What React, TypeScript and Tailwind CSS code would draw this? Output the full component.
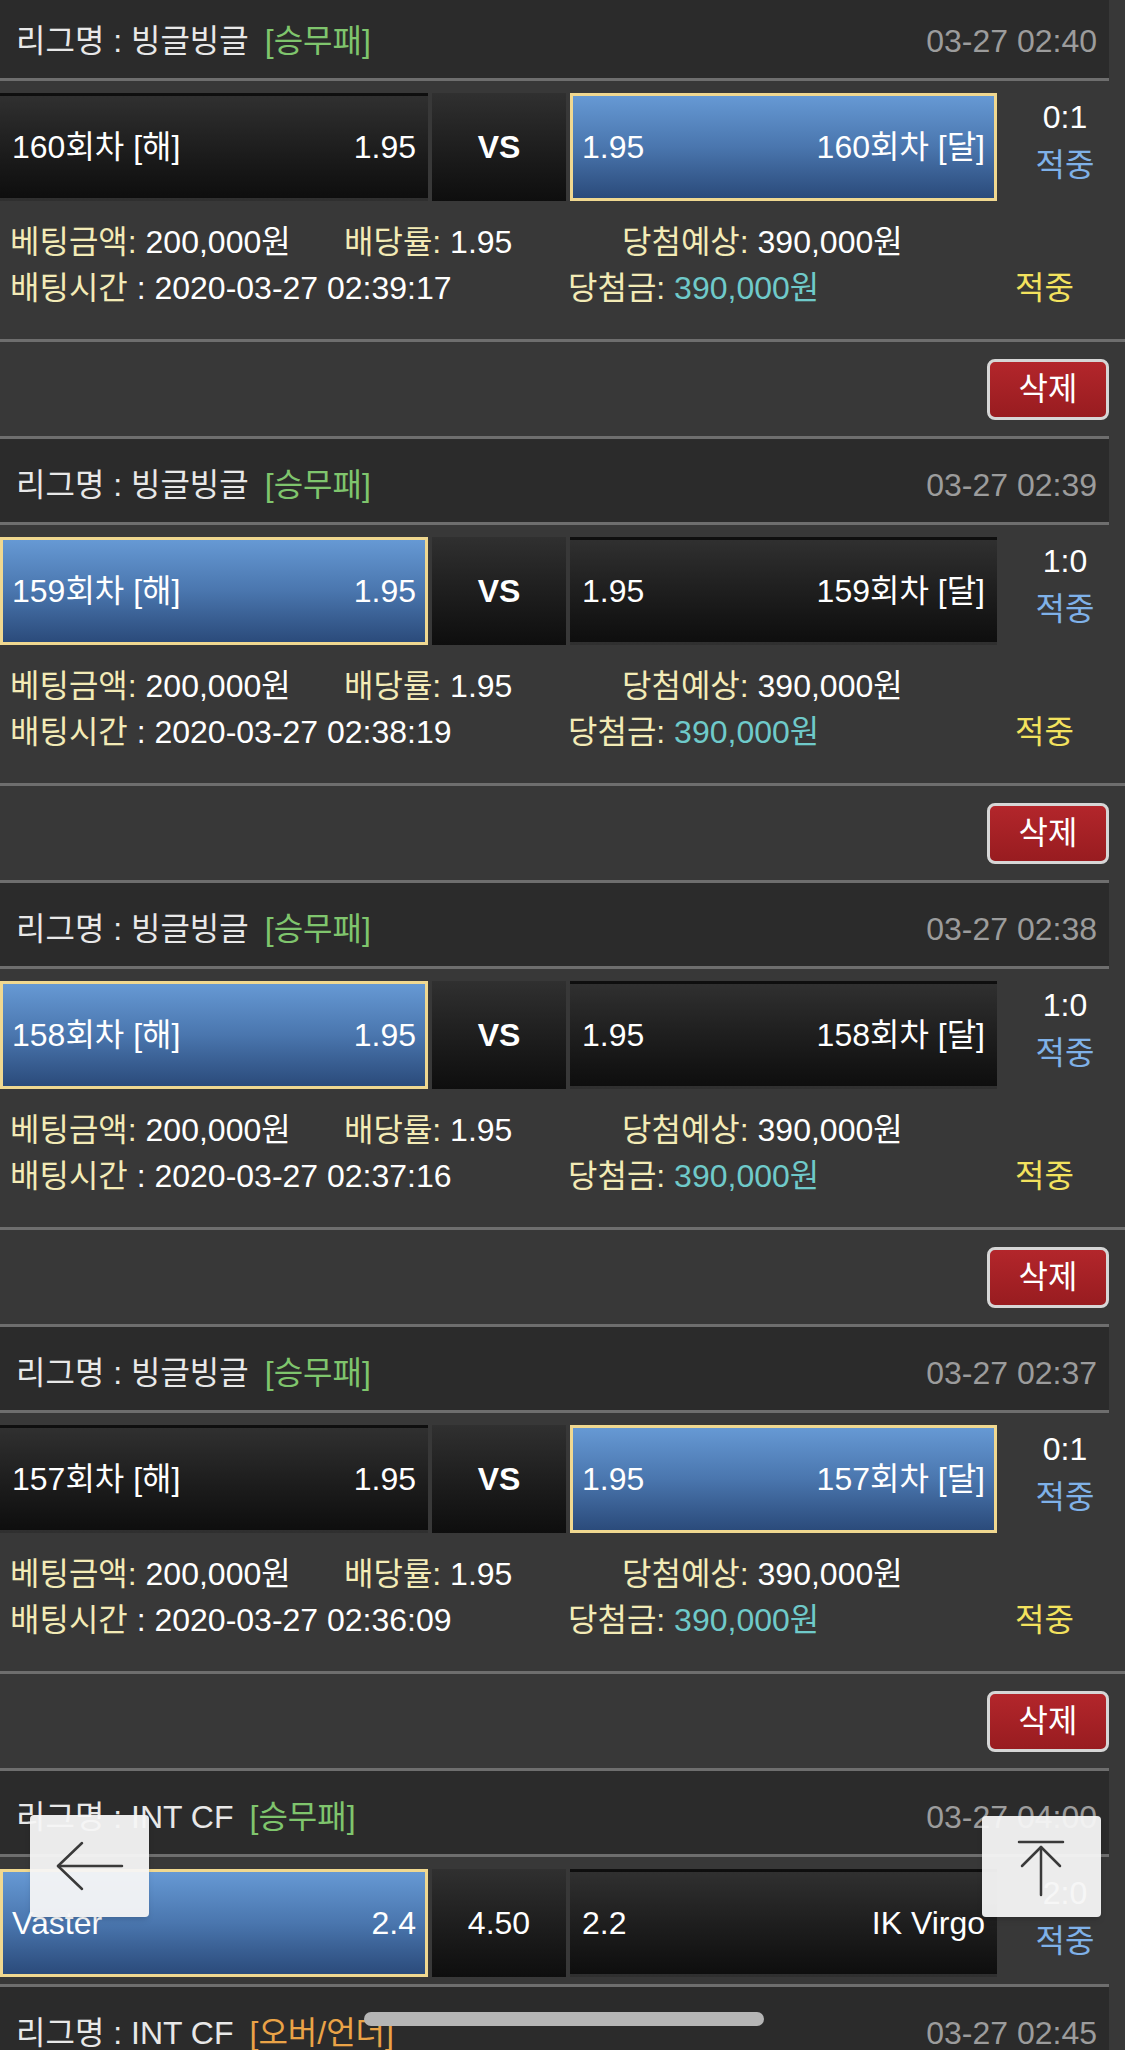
import React from "react";

type Bet = {
  round: number;
  pick: "home" | "away";
  score: string;
  time: string;
  betTime: string;
};

const bets: Bet[] = [
  { round: 160, pick: "away", score: "0:1", time: "03-27 02:40", betTime: "2020-03-27 02:39:17" },
  { round: 159, pick: "home", score: "1:0", time: "03-27 02:39", betTime: "2020-03-27 02:38:19" },
  { round: 158, pick: "home", score: "1:0", time: "03-27 02:38", betTime: "2020-03-27 02:37:16" },
  { round: 157, pick: "away", score: "0:1", time: "03-27 02:37", betTime: "2020-03-27 02:36:09" },
];

const LeagueHeader = ({ league, type, typeClass, time }: { league: string; type: string; typeClass: string; time: string }) => (
  <div className="w-[1109px] border-y-[3px] border-[#6e6e6e] bg-[#2b2b2b]">
    <div className="flex h-[83px] items-center justify-between pl-4 pr-3 pt-2">
      <div className="text-[#e8e8e8]">
        {league}
        <span className={`ml-4 ${typeClass}`}>{type}</span>
      </div>
      <div className="text-[#9c9c9c]">{time}</div>
    </div>
  </div>
);

const Side = ({ name, odds, picked, reverse }: { name: string; odds: string; picked: boolean; reverse?: boolean }) => (
  <div
    className={`flex h-full items-center justify-between border-[3px] px-[9px] text-white ${
      reverse ? "flex-row-reverse" : ""
    } ${
      picked
        ? "border-[#f0d890] bg-linear-to-b from-[#6699d4] via-[#4a76ae] to-[#2b4b7b]"
        : "border-transparent bg-linear-to-b from-[#303030] to-[#0e0e0e]"
    }`}
  >
    <span>{name}</span>
    <span>{odds}</span>
  </div>
);

const MatchRow = ({
  home,
  away,
  homeOdds,
  awayOdds,
  middle,
  bold,
  pick,
  score,
}: {
  home: string;
  away: string;
  homeOdds: string;
  awayOdds: string;
  middle: string;
  bold?: boolean;
  pick: "home" | "away";
  score: string;
}) => (
  <div className="mt-3 grid h-[104px] grid-cols-[428px_134px_427px_1fr] gap-x-1">
    <Side name={home} odds={homeOdds} picked={pick === "home"} />
    <div className={`flex items-center justify-center bg-linear-to-b from-[#303030] to-[#0e0e0e] text-white ${bold ? "font-bold" : ""}`}>
      {middle}
    </div>
    <Side name={away} odds={awayOdds} picked={pick === "away"} reverse />
    <div className="flex h-full flex-col items-center justify-center pb-3 pl-1 leading-[48px]">
      <span className="text-white">{score}</span>
      <span className="text-[#7fb1e8]">적중</span>
    </div>
  </div>
);

const BetBlock = ({ bet }: { bet: Bet }) => (
  <div>
    <LeagueHeader league="리그명 : 빙글빙글" type="[승무패]" typeClass="text-[#7fc56d]" time={bet.time} />
    <MatchRow
      home={`${bet.round}회차 [해]`}
      away={`${bet.round}회차 [달]`}
      homeOdds="1.95"
      awayOdds="1.95"
      middle="VS"
      bold
      pick={bet.pick}
      score={bet.score}
    />
    <div className="h-[142px] pl-[10px] pt-[22px] leading-[46px]">
      <div className="flex">
        <div className="w-[334px]">
          <span className="text-[#f3ebb6]">베팅금액:</span> <span className="text-white">200,000원</span>
        </div>
        <div className="w-[278px]">
          <span className="text-[#f3ebb6]">배당률:</span> <span className="text-white">1.95</span>
        </div>
        <div>
          <span className="text-[#f3ebb6]">당첨예상:</span> <span className="text-white">390,000원</span>
        </div>
      </div>
      <div className="flex">
        <div className="w-[558px]">
          <span className="text-[#f3ebb6]">배팅시간</span> <span className="text-white">: {bet.betTime}</span>
        </div>
        <div className="w-[447px]">
          <span className="text-[#f3ebb6]">당첨금:</span> <span className="text-[#6fcaca]">390,000원</span>
        </div>
        <div className="text-[#f3e25e]">적중</div>
      </div>
    </div>
    <div className="flex h-[97px] items-center justify-end border-t-[3px] border-[#6e6e6e] pr-4">
      <button
        type="button"
        className="flex h-[61px] w-[122px] items-center justify-center rounded-lg border-[3px] border-[#d6d6d6] bg-linear-to-b from-[#b3262b] to-[#981c20] text-white"
      >
        삭제
      </button>
    </div>
  </div>
);

export default function App() {
  return (
    <div className="relative h-[2050px] w-[1125px] overflow-hidden bg-[#383838] font-['Liberation_Sans','Noto_Sans_CJK_KR',sans-serif] text-[32px] leading-none">
      <div className="-mt-2">
        {bets.map((b) => (
          <BetBlock key={b.round} bet={b} />
        ))}
        <LeagueHeader league="리그명 : INT CF" type="[승무패]" typeClass="text-[#7fc56d]" time="03-27 04:00" />
        <MatchRow
          home="Vaster"
          away="IK Virgo"
          homeOdds="2.4"
          awayOdds="2.2"
          middle="4.50"
          pick="home"
          score="2:0"
        />
        <div className="h-[11px]" />
        <LeagueHeader league="리그명 : INT CF" type="[오버/언더]" typeClass="text-[#eaa347]" time="03-27 02:45" />
      </div>

      <button
        type="button"
        className="absolute left-[30px] top-[1815px] h-[102px] w-[119px] rounded-[4px] bg-[#f5f5f5]/95 shadow-md"
      >
        <svg width="119" height="102" viewBox="0 0 119 102" fill="none" stroke="#3a3a3a" strokeWidth="2.5" strokeLinecap="round" strokeLinejoin="round">
          <path d="M28 51H92" />
          <path d="M52 28L28 51L52 74" />
        </svg>
      </button>
      <button
        type="button"
        className="absolute left-[982px] top-[1816px] h-[101px] w-[119px] rounded-[4px] bg-[#f5f5f5]/95 shadow-md"
      >
        <svg width="119" height="101" viewBox="0 0 119 101" fill="none" stroke="#3a3a3a" strokeWidth="2.5" strokeLinecap="round" strokeLinejoin="round">
          <path d="M37 26H81" />
          <path d="M59 31V79" />
          <path d="M40 50L59 31L78 50" />
        </svg>
      </button>
      <div className="absolute left-[364px] top-[2012px] h-[14px] w-[400px] rounded-full bg-[#b5b5b5]" />
    </div>
  );
}
